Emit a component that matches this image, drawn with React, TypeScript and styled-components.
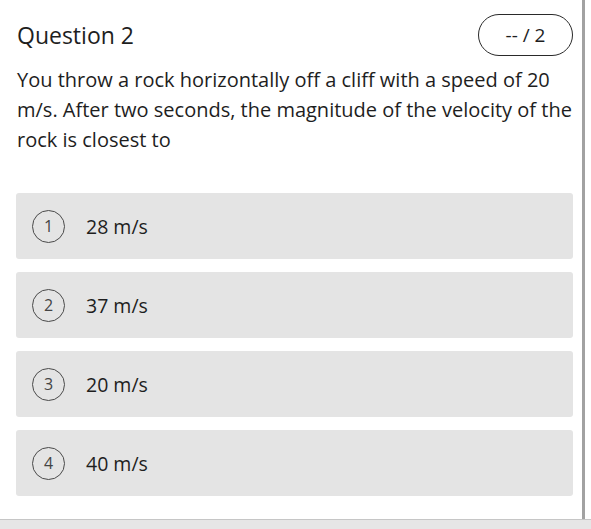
import React from "react";
import styled, { createGlobalStyle } from "styled-components";

const GlobalStyle = createGlobalStyle`
  html, body {
    margin: 0;
    padding: 0;
    background: #fff;
  }
  body {
    font-family: "Open Sans", "Noto Sans", sans-serif;
    color: #222;
  }
`;

const Page = styled.div`
  width: 591px;
  height: 529px;
  display: flex;
  flex-direction: column;
  overflow: hidden;
`;

const Frame = styled.div`
  display: flex;
  flex: 1;
  min-height: 0;
`;

const Panel = styled.div`
  width: 585px;
  box-sizing: border-box;
  padding: 14px 9px 0 16px;
  border-right: 3px solid #a2a2a2;
  display: flex;
  flex-direction: column;
`;

const Footer = styled.div`
  height: 9px;
  border-top: 1px solid #c6c6c6;
  background: #e6e6e6;
`;

const Header = styled.div`
  display: flex;
  align-items: center;
  justify-content: space-between;
  height: 42px;
`;

const Title = styled.h2`
  margin: 0 0 0 1px;
  font-size: 23px;
  font-weight: 400;
  color: #1e1e1e;
`;

const Score = styled.div`
  width: 95px;
  height: 42px;
  box-sizing: border-box;
  border: 1px solid #2a2a2a;
  border-radius: 21px;
  display: flex;
  align-items: center;
  justify-content: center;
  font-size: 19px;
  color: #1e1e1e;
`;

const Prompt = styled.p`
  margin: 9px 0 0 1px;
  font-size: 20px;
  line-height: 30px;
  color: #1e1e1e;
`;

const Options = styled.div`
  margin-top: 38px;
  display: flex;
  flex-direction: column;
  gap: 13px;
`;

const Option = styled.div`
  height: 66px;
  box-sizing: border-box;
  padding: 0 16px;
  display: flex;
  align-items: center;
  gap: 21px;
  background: #e4e4e4;
  border-radius: 3px;
`;

const Badge = styled.span`
  width: 33px;
  height: 33px;
  box-sizing: border-box;
  border: 1.5px solid #4a4a4a;
  border-radius: 50%;
  display: flex;
  align-items: center;
  justify-content: center;
  font-size: 16px;
  color: #444;
`;

const Answer = styled.span`
  font-size: 19.5px;
  color: #1e1e1e;
`;

const answers = ["28 m/s", "37 m/s", "20 m/s", "40 m/s"];

export default function App() {
  return (
    <>
      <GlobalStyle />
      <Page>
        <Frame>
          <Panel>
            <Header>
              <Title>Question 2</Title>
              <Score>-- / 2</Score>
            </Header>
            <Prompt>
              You throw a rock horizontally off a cliff with a speed of 20
              m/s. After two seconds, the magnitude of the velocity of the
              rock is closest to
            </Prompt>
            <Options>
              {answers.map((a, i) => (
                <Option key={a}>
                  <Badge>{i + 1}</Badge>
                  <Answer>{a}</Answer>
                </Option>
              ))}
            </Options>
          </Panel>
        </Frame>
        <Footer />
      </Page>
    </>
  );
}
